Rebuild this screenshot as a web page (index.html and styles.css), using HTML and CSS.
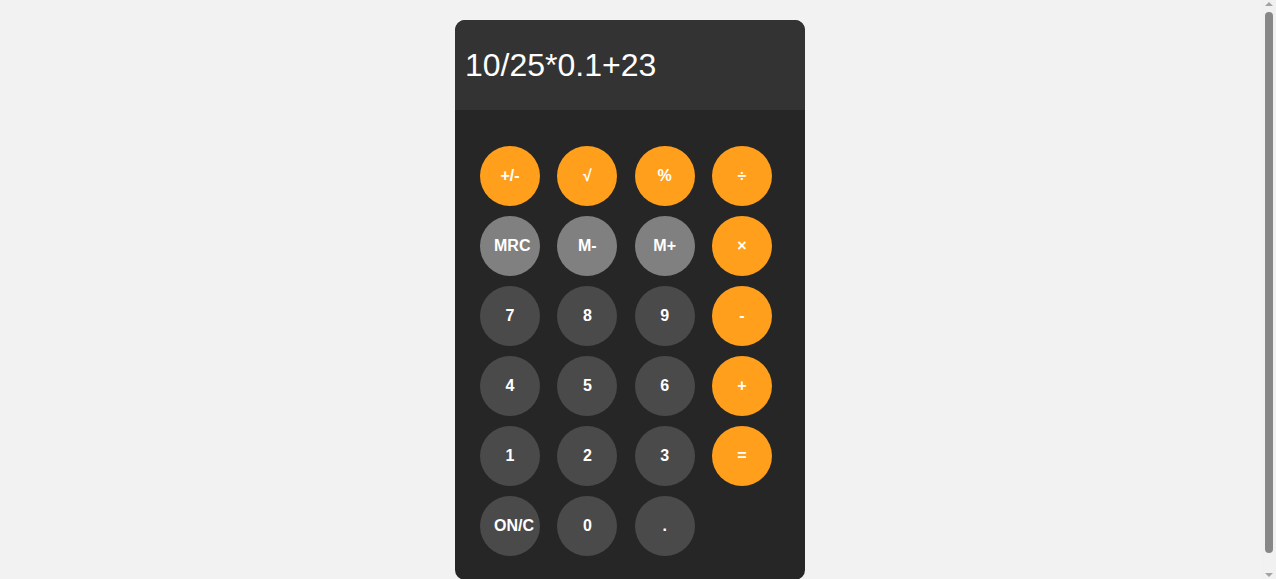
FILE: index.html
```html
<!DOCTYPE html>
<html lang="en">
<head>
<meta charset="utf-8">
<title>Calculator</title>
<link rel="stylesheet" href="styles.css">
</head>
<body>
<div class="calc">
  <div class="display">10/25*0.1+23</div>
  <div class="keys">
    <button class="key op">+/-</button>
    <button class="key op">√</button>
    <button class="key op">%</button>
    <button class="key op">÷</button>
    <button class="key mem">MRC</button>
    <button class="key mem">M-</button>
    <button class="key mem">M+</button>
    <button class="key op">×</button>
    <button class="key num">7</button>
    <button class="key num">8</button>
    <button class="key num">9</button>
    <button class="key op">-</button>
    <button class="key num">4</button>
    <button class="key num">5</button>
    <button class="key num">6</button>
    <button class="key op">+</button>
    <button class="key num">1</button>
    <button class="key num">2</button>
    <button class="key num">3</button>
    <button class="key op">=</button>
    <button class="key num">ON/C</button>
    <button class="key num">0</button>
    <button class="key num">.</button>
  </div>
</div>
<div class="scrollbar" aria-hidden="true">
  <div class="arrow up"></div>
  <div class="thumb"></div>
  <div class="arrow down"></div>
</div>
</body>
</html>
```
FILE: styles.css
```css
html, body {
  margin: 0;
  padding: 0;
  background: #f2f2f2;
  font-family: "Liberation Sans", Arial, sans-serif;
}
body {
  padding-right: 16px;
}
.calc {
  width: 350px;
  margin: 20px auto 13px;
  border-radius: 10px;
  overflow: hidden;
  background: #262626;
}
.display {
  height: 90px;
  box-sizing: border-box;
  padding: 0 10px;
  display: flex;
  align-items: center;
  background: #333333;
  color: #ffffff;
  font-size: 32px;
}
.keys {
  display: grid;
  grid-template-columns: repeat(4, 60px);
  grid-auto-rows: 60px;
  column-gap: 17.33px;
  row-gap: 10px;
  padding: 36px 25px 24px;
}
.key {
  width: 60px;
  height: 60px;
  border: none;
  border-radius: 50%;
  padding: 0 14px;
  color: #ffffff;
  font-family: "Liberation Sans", Arial, sans-serif;
  font-size: 16px;
  font-weight: bold;
  white-space: nowrap;
}
.op { background: #ff9f1c; }
.mem { background: #808080; }
.num { background: #4a4a4a; }

.scrollbar {
  position: fixed;
  top: 0;
  right: 0;
  width: 15px;
  height: 100%;
  background: #f1f1f1;
  display: flex;
  flex-direction: column;
  align-items: center;
}
.arrow {
  width: 0;
  height: 0;
  border-left: 4px solid transparent;
  border-right: 4px solid transparent;
}
.arrow.up {
  margin-top: 2px;
  border-bottom: 4px solid #a3a3a3;
}
.arrow.down {
  margin-bottom: 2px;
  border-top: 4px solid #a3a3a3;
}
.thumb {
  width: 8px;
  flex: 1;
  margin: 6px 0 20px;
  border-radius: 4px;
  background: #878787;
}
```
